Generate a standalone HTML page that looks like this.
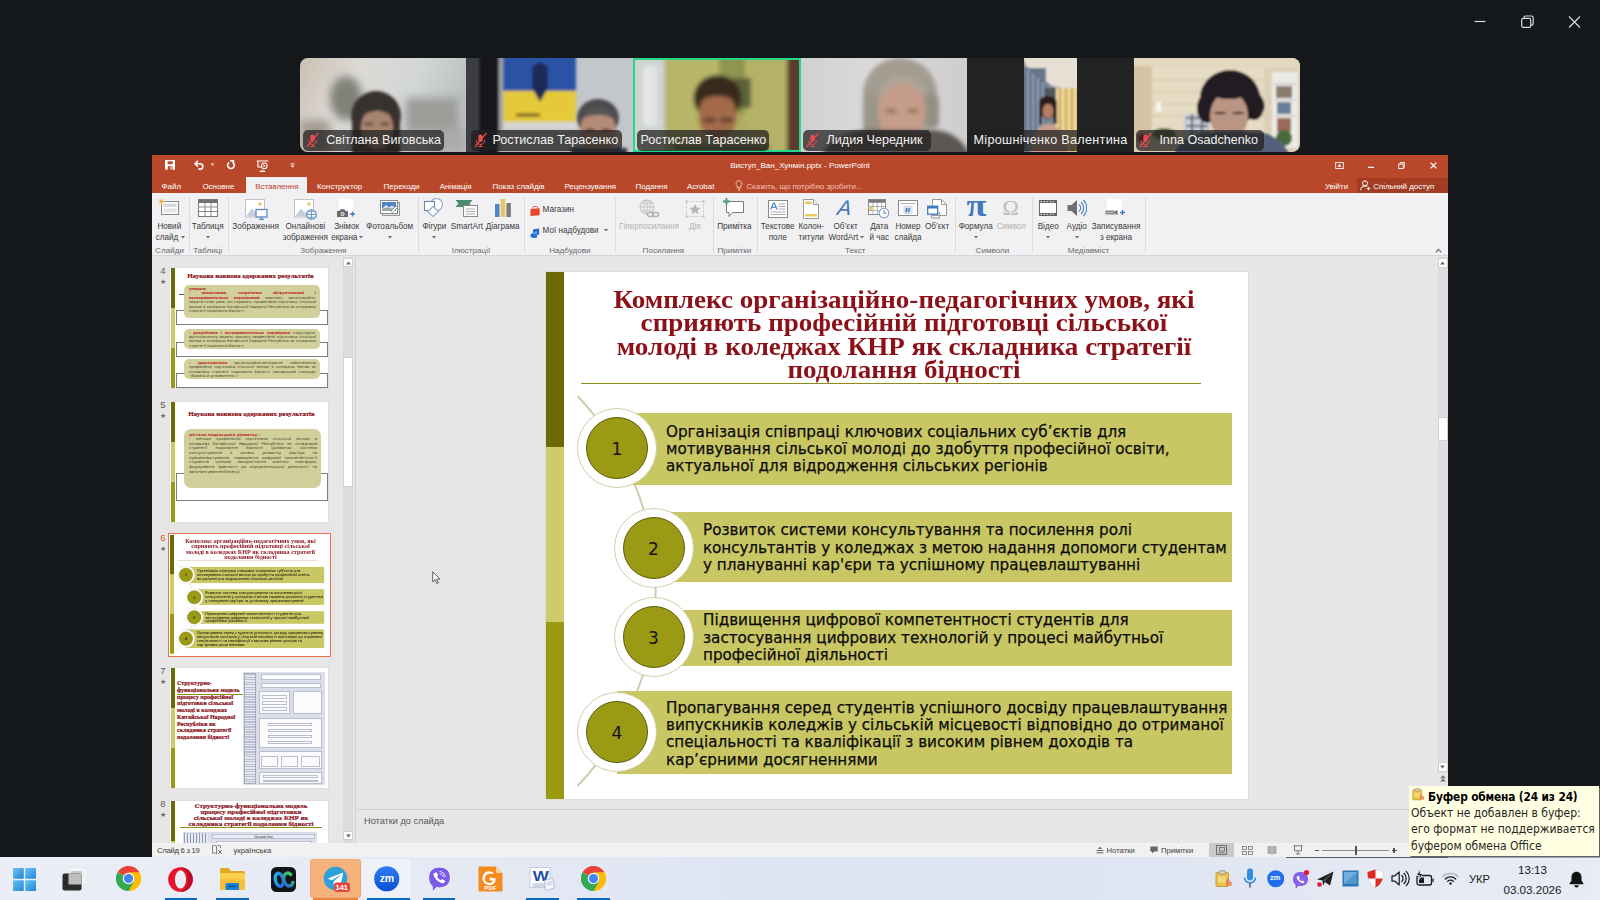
<!DOCTYPE html>
<html lang="uk">
<head>
<meta charset="utf-8">
<title>Zoom - PowerPoint</title>
<style>
*{box-sizing:border-box;margin:0;padding:0}
html,body{width:1600px;height:900px;overflow:hidden;background:#14181b;font-family:"Liberation Sans",sans-serif;}
.abs{position:absolute}
#root{position:absolute;left:0;top:0;width:1600px;height:900px;overflow:hidden;background:#14181b}
/* zoom window controls */
.zc{position:absolute;top:10px;width:24px;height:24px}
/* video strip */
#strip{position:absolute;left:300px;top:58px;width:1000px;height:94px;border-radius:8px;overflow:hidden;background:#222}
.tile{position:absolute;top:0;height:94px;overflow:hidden}
.nm{position:absolute;top:72px;height:20.500px;background:rgba(34,32,32,.74);border-radius:5px;color:#f1f1f1;font-size:12.6px;line-height:20px;white-space:nowrap}
.nm svg{vertical-align:-3px;margin-right:6px}
/* ppt window */
#ppt{position:absolute;left:152px;top:155px;width:1296px;height:702px;background:#e6e6e6;overflow:hidden}
#pg{position:absolute;left:-152px;top:-155px;width:1600px;height:900px}
#ptitle{position:absolute;left:152px;top:155px;width:1296px;height:38px;background:#b9482b}
#ribbon{position:absolute;left:152px;top:193px;width:1296px;height:63px;background:#f1f0f2;border-bottom:1px solid #d6d6d6}
.tab{position:absolute;top:180.500px;font-size:7.95px;color:#fff;white-space:nowrap;line-height:12px}
.rl{position:absolute;font-size:8.150px;color:#3b3b3b;white-space:nowrap;line-height:10.6px;text-align:center;transform:translateX(-50%)}
.gl{position:absolute;top:245.500px;font-size:8.1px;color:#6a6a6a;white-space:nowrap;line-height:10px;transform:translateX(-50%)}
.sep{position:absolute;top:197px;width:1px;height:56px;background:#dcdcdc}
.ic{position:absolute}
/* thumbs */
#thumbs{position:absolute;left:152px;top:256px;width:204px;height:587px;background:#e6e6e6;border-right:1px solid #cfcfcf;overflow:hidden}
#tpg{position:absolute;left:-152px;top:-256px;width:1600px;height:900px}
.tn{position:absolute;left:7px;font-size:9px;color:#555;line-height:10px}
.th{position:absolute;left:19px;width:157px;height:118px;background:#fff;overflow:hidden}
/* main slide */
#slide{position:absolute;left:546px;top:271.500px;width:702.300px;height:527px;background:#fff;box-shadow:0 0 0 1px #dcdcdc;overflow:hidden}
#spg{position:absolute;left:-546px;top:-271.500px;width:1600px;height:900px}
#status{position:absolute;left:152px;top:843px;width:1296px;height:14px;background:#f1f1f1;font-size:8.2px;color:#444;line-height:14px}

/* slide */
.st{position:absolute;left:546px;width:716px;text-align:center;font-family:"Liberation Serif",serif;font-weight:bold;color:#8c1018;font-size:24.6px;line-height:24px;white-space:nowrap;transform:scaleX(1.10);transform-origin:358px 0}
.bar{position:absolute;background:#c9c664}
.bt{position:absolute;font-family:"DejaVu Sans","Liberation Sans",sans-serif;font-size:15.2px;line-height:17.35px;color:#0c0c0c;white-space:nowrap;-webkit-text-stroke:0.25px #0c0c0c}
.circ{position:absolute;width:80px;height:80px;border-radius:50%;background:#fff;border:1.300px solid #cfcea8}
.circ i{position:absolute;left:8px;top:8px;width:62px;height:62px;border-radius:50%;background:#9b9a14;border:1px solid #5d5c0c;font-style:normal;font-family:"DejaVu Sans",sans-serif;font-size:17px;color:#111;text-align:center;line-height:63px}

/* thumbs */
.tnum{position:absolute;margin-top:-1.500px;left:158px;width:10px;font-size:9.5px;color:#5a5a5a;line-height:10px;text-align:center}
.tstar{position:absolute;margin-top:-1px;left:158.500px;width:9px;font-size:7px;color:#666;line-height:8px;text-align:center}
.thumb{position:absolute;left:170px;width:158px;height:120px;background:#fff;overflow:hidden;box-shadow:0 0 0 1px #dedede}
.thumb .in{position:absolute;left:-170px;width:1600px;height:900px}
.tt{position:absolute;font-family:"Liberation Serif",serif;font-weight:bold;color:#8c1018;font-size:6.95px;line-height:6.6px;white-space:nowrap;text-align:center;transform:translateX(-50%);-webkit-text-stroke:0.2px #8c1018}
.tbx{position:absolute;background:#d1d09a;border-radius:5px;font-size:3.6px;line-height:4.4px;color:#3c3c2c;padding:2px 4px 0 5px;text-align:justify;overflow:hidden;font-family:"DejaVu Sans",sans-serif}
.tbx b{color:#c0262c}
.trc{position:absolute;background:#fff;border:1px solid #7d7d7d}
.lb{position:absolute;left:170.800px;width:3.800px}
.thumb .bt{color:#33331a;-webkit-text-stroke:0.400px #33331a}
/* taskbar */
#task{position:absolute;left:0;top:857px;width:1600px;height:43px;background:linear-gradient(90deg,#ebeef6 0%,#e6eaf4 25%,#dde4f2 50%,#dfe5f2 72%,#e8ecf4 100%)}
#tip{position:absolute;left:1409px;top:785.500px;width:189.500px;height:70.500px;background:#ffffe1;color:#000;font-family:"DejaVu Sans Condensed","DejaVu Sans",sans-serif;font-size:12px;line-height:16.400px;box-shadow:1.500px 1.500px 0 #5d6068}
</style>
</head>
<body>
<div id="root">

<!-- ZOOM WINDOW CONTROLS -->
<svg class="zc" style="left:1468px" viewBox="0 0 24 24"><path d="M6.5 11.5h11" stroke="#d9dadb" stroke-width="1.2" fill="none"/></svg>
<svg class="zc" style="left:1515px" viewBox="0 0 24 24"><rect x="6.7" y="8.3" width="9" height="9" rx="1.6" stroke="#d9dadb" stroke-width="1.2" fill="none"/><path d="M9 8.2V7.6a1.6 1.6 0 0 1 1.6-1.6h6a1.6 1.6 0 0 1 1.6 1.6v6a1.6 1.6 0 0 1-1.6 1.6h-.8" stroke="#d9dadb" stroke-width="1.2" fill="none"/></svg>
<svg class="zc" style="left:1562px" viewBox="0 0 24 24"><path d="M7 6.5l11 11M18 6.5l-11 11" stroke="#d9dadb" stroke-width="1.2" fill="none"/></svg>

<!-- VIDEO STRIP -->
<div id="strip">
<div class="tile" style="left:0;width:166px">
<svg width="166" height="94" viewBox="0 0 166 94"><defs><filter id="b1" x="-20%" y="-20%" width="140%" height="140%"><feGaussianBlur stdDeviation="4"/></filter><filter id="b2" x="-20%" y="-20%" width="140%" height="140%"><feGaussianBlur stdDeviation="1.800"/></filter><linearGradient id="g1" x1="0" y1="0" x2="1" y2="0.300"><stop offset="0" stop-color="#cbbfb2"/><stop offset="0.350" stop-color="#dcd9d5"/><stop offset="0.700" stop-color="#d3d6d6"/><stop offset="1" stop-color="#bcc0c0"/></linearGradient></defs>
<rect width="166" height="94" fill="url(#g1)"/>
<g filter="url(#b1)"><ellipse cx="46" cy="40" rx="16" ry="22" fill="#7f8278"/><rect x="106" y="40" width="52" height="34" fill="#9b9d99"/><rect x="0" y="62" width="30" height="32" fill="#a59c92"/><rect x="130" y="70" width="36" height="24" fill="#aaa"/></g>
<g filter="url(#b2)"><ellipse cx="76" cy="58" rx="25" ry="25" fill="#39312f"/><rect x="52" y="58" width="48" height="40" fill="#39312f"/><ellipse cx="77" cy="70" rx="16" ry="21" fill="#a8846f"/><path d="M61 60c2-9 9-13 16-13 8 0 14 4 16 13-5-5-10-7-16-7s-11 2-16 7z" fill="#39312f"/><ellipse cx="69" cy="66" rx="4.500" ry="1.300" fill="#4e382f"/><ellipse cx="85" cy="66" rx="4.500" ry="1.300" fill="#4e382f"/></g>
</svg></div>
<div class="tile" style="left:166px;width:166.500px">
<svg width="167" height="94" viewBox="0 0 167 94"><defs><filter id="b3" x="-20%" y="-20%" width="140%" height="140%"><feGaussianBlur stdDeviation="1.600"/></filter></defs>
<rect width="167" height="94" fill="#c3c6ca"/>
<g filter="url(#b3)"><rect x="-3" y="-3" width="16" height="100" fill="#3a3d42"/><rect x="13" y="-3" width="20" height="100" fill="#17181c"/><rect x="33" y="-3" width="6" height="100" fill="#9ea3aa"/><rect x="37" y="-4" width="73" height="37" fill="#2a52a6"/><rect x="37" y="33" width="73" height="31" fill="#e6c938"/><path d="M66 8l8-4 8 4v22l-8 14-8-14z" fill="#1d2c58"/><rect x="50" y="55" width="24" height="4" fill="#8c7a2c"/><rect x="37" y="64" width="75" height="8" fill="#d6d6d6"/><rect x="33" y="72" width="90" height="26" fill="#b2b5b9"/></g>
<g filter="url(#b3)"><ellipse cx="132" cy="60" rx="21" ry="19" fill="#4d4c4e"/><ellipse cx="132" cy="74" rx="18" ry="24" fill="#b38b76"/><path d="M115 62c3-9 10-12 17-12s14 3 17 12c-5-4-11-5-17-5s-12 1-17 5z" fill="#565453"/><ellipse cx="124" cy="72" rx="5" ry="1.600" fill="#5a443a"/><ellipse cx="140" cy="72" rx="5" ry="1.600" fill="#5a443a"/><rect x="105" y="90" width="56" height="10" fill="#2c3240"/></g>
</svg></div>
<div class="tile" style="left:332.500px;width:168px">
<svg width="168" height="94" viewBox="0 0 168 94"><defs><filter id="b4" x="-20%" y="-20%" width="140%" height="140%"><feGaussianBlur stdDeviation="2.200"/></filter></defs>
<rect width="168" height="94" fill="#aead62"/>
<g filter="url(#b4)"><rect x="-4" y="-4" width="36" height="102" fill="#cfd3d2"/><rect x="10" y="8" width="14" height="60" fill="#e4e6e6"/><rect x="34" y="-4" width="56" height="102" fill="#b7b669"/><rect x="86" y="-4" width="30" height="60" fill="#8f9450"/><rect x="112" y="-4" width="44" height="102" fill="#b4b267"/><rect x="154" y="-4" width="16" height="102" fill="#5d3a2a"/><rect x="100" y="20" width="18" height="30" fill="#5c6238"/>
<g transform="translate(-3.500 -4)"><ellipse cx="88" cy="44" rx="24" ry="23" fill="#38291f"/><ellipse cx="88" cy="62" rx="19" ry="25" fill="#a26a49"/><path d="M69 50c2-12 10-16 19-16s17 4 19 16c-5-6-11-8-19-8s-14 2-19 8z" fill="#38291f"/><ellipse cx="80" cy="66" rx="7" ry="2" fill="#4a2e22"/><ellipse cx="97" cy="66" rx="7" ry="2" fill="#4a2e22"/></g><rect x="40" y="86" width="96" height="14" fill="#6e6a3e"/></g>
</svg><div style="position:absolute;left:0;top:0;width:168px;height:94px;border:2.500px solid #22d98a"></div></div>
<div class="tile" style="left:500.500px;width:166.500px">
<svg width="167" height="94" viewBox="0 0 167 94"><defs><filter id="b5" x="-20%" y="-20%" width="140%" height="140%"><feGaussianBlur stdDeviation="2"/></filter><linearGradient id="g4" x1="0" y1="0" x2="1" y2="0"><stop offset="0" stop-color="#d1d0d2"/><stop offset="0.400" stop-color="#dad9da"/><stop offset="1" stop-color="#cfcdce"/></linearGradient></defs>
<rect width="167" height="94" fill="url(#g4)"/>
<g filter="url(#b5)"><ellipse cx="99" cy="36" rx="37" ry="36" fill="#a39c91"/><rect x="62" y="36" width="20" height="38" rx="6" fill="#9b948a"/><rect x="118" y="36" width="20" height="34" rx="6" fill="#958e85"/><ellipse cx="101" cy="54" rx="24" ry="30" fill="#c59d89"/><path d="M76 44c2-20 16-30 30-26 12 3 18 12 20 24-8-12-18-18-28-16-10 2-18 10-22 18z" fill="#aea698"/><ellipse cx="90" cy="53" rx="6" ry="1.500" fill="#6b4c40"/><ellipse cx="112" cy="53" rx="6" ry="1.500" fill="#6b4c40"/><path d="M20 98c10-22 40-28 60-26h50c20 0 32 10 40 26z" fill="#5c5755"/></g>
</svg></div>
<div class="tile" style="left:667px;width:166px;background:#232323">
<svg style="position:absolute;left:56.500px;top:0" width="53" height="94" viewBox="0 0 53 94"><defs><filter id="b6" x="-20%" y="-20%" width="140%" height="140%"><feGaussianBlur stdDeviation="0.900"/></filter></defs>
<rect width="53" height="94" fill="#7c8797"/>
<g filter="url(#b6)"><path d="M-2 -2h57v36L28 28 2 8z" fill="#e6e0d4"/><rect x="-2" y="10" width="24" height="90" fill="#66758a"/><path d="M4 12v80M9 16v76M14 20v72M19 24v68" stroke="#9daabb" stroke-width="1.600"/><rect x="30" y="30" width="25" height="66" fill="#d8b25a"/><path d="M33 30v64M39 30v64M45 30v64M51 30v64" stroke="#f0e2b4" stroke-width="2.400"/><rect x="20" y="30" width="12" height="26" fill="#4f5a5e"/><ellipse cx="24" cy="50" rx="8.500" ry="11" fill="#2a1d1e"/><ellipse cx="24" cy="53" rx="5.500" ry="7.500" fill="#b47b63"/><path d="M6 96c2-22 10-30 18-30s18 8 20 30z" fill="#c9a08f"/><path d="M15 44c2-8 16-8 18 0v22h-3V48c-4-3-8-3-12 0v18h-3z" fill="#2a1d1e"/></g>
</svg></div>
<div class="tile" style="left:833.500px;width:166.500px">
<svg width="167" height="94" viewBox="0 0 167 94"><defs><filter id="b7" x="-20%" y="-20%" width="140%" height="140%"><feGaussianBlur stdDeviation="1.300"/></filter></defs>
<rect width="167" height="94" fill="#dbd0b6"/>
<g filter="url(#b7)"><rect x="-2" y="-2" width="171" height="12" fill="#e3d8bf"/><rect x="18" y="10" width="112" height="64" fill="#e6dcc3"/><path d="M18 22h112M18 34h112M18 46h112M18 58h112" stroke="#d2c4a4" stroke-width="1"/><rect x="-2" y="8" width="20" height="70" fill="#d3c4a3"/><rect x="138" y="14" width="26" height="76" fill="#ebebe6"/><path d="M140 26h22M140 42h22M140 58h22" stroke="#c9c9c4" stroke-width="1.400"/><rect x="142" y="28" width="16" height="12" fill="#8a7a70"/><rect x="143" y="44" width="14" height="12" fill="#6a7f98"/><rect x="143" y="60" width="14" height="14" fill="#9a6a5a"/><ellipse cx="150" cy="80" rx="8" ry="8" fill="#4c6a3a"/><ellipse cx="30" cy="76" rx="12" ry="6" fill="#55703f"/><circle cx="8" cy="80" r="4.500" fill="#b3232a"/><rect x="22" y="44" width="5" height="10" fill="#f4f4f0"/>
<rect x="50" y="56" width="26" height="22" fill="#c5ccd6"/><path d="M52 60h22M52 68h22M58 56v22M68 56v22" stroke="#4a5060" stroke-width="1.600"/>
<ellipse cx="96" cy="40" rx="30" ry="28" fill="#221d20"/><ellipse cx="73" cy="50" rx="10" ry="15" fill="#221d20"/><ellipse cx="120" cy="48" rx="10" ry="14" fill="#221d20"/><ellipse cx="95" cy="58" rx="19" ry="24" fill="#bb9584"/><ellipse cx="95" cy="30" rx="23" ry="11" fill="#221d20"/><ellipse cx="86" cy="55" rx="6.500" ry="1.500" fill="#5c463f"/><ellipse cx="104" cy="55" rx="6.500" ry="1.500" fill="#5c463f"/><path d="M40 98c4-18 24-24 40-24h40c16 0 30 8 36 24z" fill="#55607a"/></g>
</svg></div>
<div class="nm" style="left:3.4px;width:140.7px"><span style="position:absolute;left:22.8px;top:0">Світлана Виговська</span><span style="position:absolute;left:3px;top:0.500px"><svg width="13" height="16" viewBox="0 0 13 16"><rect x="4.300" y="2.500" width="4.400" height="7.500" rx="2.200" fill="#ea4a4e"/><path d="M2.400 8.300a4.100 4.100 0 0 0 8.200 0M6.500 12.400v1.800M4.200 14.500h4.600" fill="none" stroke="#ea4a4e" stroke-width="1"/><path d="M0.800 15L12.400 1" stroke="#ea4a4e" stroke-width="1.200"/></svg></span></div>
<div class="nm" style="left:171.3px;width:150.5px"><span style="position:absolute;left:21.1px;top:0">Ростислав Тарасенко</span><span style="position:absolute;left:3px;top:0.500px"><svg width="13" height="16" viewBox="0 0 13 16"><rect x="4.300" y="2.500" width="4.400" height="7.500" rx="2.200" fill="#ea4a4e"/><path d="M2.400 8.300a4.100 4.100 0 0 0 8.200 0M6.500 12.400v1.800M4.200 14.500h4.600" fill="none" stroke="#ea4a4e" stroke-width="1"/><path d="M0.800 15L12.400 1" stroke="#ea4a4e" stroke-width="1.200"/></svg></span></div>
<div class="nm" style="left:336.5px;width:132.2px"><span style="position:absolute;left:4.0px;top:0">Ростислав Тарасенко</span></div>
<div class="nm" style="left:503.3px;width:127.5px"><span style="position:absolute;left:23.2px;top:0"~"letter-spacing:0.330px">Лидия Чередник</span><span style="position:absolute;left:3px;top:0.500px"><svg width="13" height="16" viewBox="0 0 13 16"><rect x="4.300" y="2.500" width="4.400" height="7.500" rx="2.200" fill="#ea4a4e"/><path d="M2.400 8.300a4.100 4.100 0 0 0 8.200 0M6.500 12.400v1.800M4.200 14.500h4.600" fill="none" stroke="#ea4a4e" stroke-width="1"/><path d="M0.800 15L12.400 1" stroke="#ea4a4e" stroke-width="1.200"/></svg></span></div>
<div class="nm" style="left:669.4px;width:160.5px"><span style="position:absolute;left:4.1px;top:0;letter-spacing:0.310px">Мірошніченко Валентина</span></div>
<div class="nm" style="left:836.2px;width:127.5px"><span style="position:absolute;left:23.2px;top:0">Inna Osadchenko</span><span style="position:absolute;left:3px;top:0.500px"><svg width="13" height="16" viewBox="0 0 13 16"><rect x="4.300" y="2.500" width="4.400" height="7.500" rx="2.200" fill="#ea4a4e"/><path d="M2.400 8.300a4.100 4.100 0 0 0 8.200 0M6.500 12.400v1.800M4.200 14.500h4.600" fill="none" stroke="#ea4a4e" stroke-width="1"/><path d="M0.800 15L12.400 1" stroke="#ea4a4e" stroke-width="1.200"/></svg></span></div>
</div>

<!-- POWERPOINT WINDOW -->
<div id="ppt"><div id="pg">
  <div id="ptitle"></div>

  <!-- quick access toolbar -->
  <svg class="abs" style="left:164.800px;top:160.200px" width="10.400" height="9.800" viewBox="0 0 10.400 9.800"><rect x="0" y="0" width="10.400" height="9.800" rx="0.600" fill="#fff"/><rect x="2.600" y="1.300" width="5.200" height="2.900" fill="#b9482b"/><rect x="2.800" y="6.300" width="4.800" height="3.500" fill="#b9482b"/><rect x="5.600" y="7" width="1.200" height="2.100" fill="#fff"/></svg>
  <svg class="abs" style="left:193.600px;top:159.800px" width="11" height="10" viewBox="0 0 14 12"><path d="M1.500 4.400h6.300a3.400 3.400 0 0 1 0 6.800H5.600" fill="none" stroke="#fff" stroke-width="2.100"/><path d="M5 0.800L1.400 4.400 5 8" fill="none" stroke="#fff" stroke-width="2.100"/></svg>
  <svg class="abs" style="left:209.500px;top:163.200px" width="5" height="3.500" viewBox="0 0 6 4"><path d="M0.600 0.600h4.800L3 3.400z" fill="#f3d5cc"/></svg>
  <svg class="abs" style="left:225.500px;top:160px" width="10" height="10" viewBox="0 0 13 13"><path d="M4.100 3.200A4.300 4.300 0 1 0 9 3.300" fill="none" stroke="#fff" stroke-width="2.100"/><path d="M5.400 0.800h4.200v4.200" fill="none" stroke="#fff" stroke-width="2.100"/></svg>
  <svg class="abs" style="left:256px;top:159.500px" width="13" height="12" viewBox="0 0 15 14"><path d="M0.800 1.200h13.400M2.200 1.400v6.800h4M7.400 11.400v1.800M4.200 13.300h6.400" fill="none" stroke="#fff" stroke-width="1.300"/><circle cx="9.600" cy="6.800" r="3.300" fill="none" stroke="#fff" stroke-width="1.200"/><path d="M8.600 5.200l2.800 1.600-2.800 1.600z" fill="#fff"/></svg>
  <svg class="abs" style="left:290.200px;top:162.500px" width="5" height="5.500" viewBox="0 0 7 7"><path d="M0.800 0.900h5.400" stroke="#fff" stroke-width="1.300"/><path d="M0.800 3h5.400L3.500 6z" fill="#fff"/></svg>
  <div class="abs" style="left:600px;top:160.300px;width:400px;text-align:center;font-size:8px;color:#fff;line-height:12px;white-space:nowrap">Виступ_Ван_Хунмін.pptx - PowerPoint</div>
  <!-- window buttons -->
  <svg class="abs" style="left:1335px;top:161.500px" width="9" height="7" viewBox="0 0 11 9"><rect x="0.600" y="0.600" width="9.800" height="7.800" fill="none" stroke="#fff" stroke-width="1.100"/><path d="M5.500 2.400l2.600 3.600H2.900z" fill="#fff"/></svg>
  <svg class="abs" style="left:1367.500px;top:166px" width="6.500" height="3" viewBox="0 0 8 3"><path d="M0 1.300h7.500" stroke="#fff" stroke-width="1.500"/></svg>
  <svg class="abs" style="left:1397.500px;top:161.500px" width="7.500" height="7" viewBox="0 0 9 9"><rect x="0.600" y="2.600" width="5.800" height="5.800" fill="none" stroke="#fff" stroke-width="1.200"/><path d="M2.600 2.400V0.700h5.800v5.800H6.600" fill="none" stroke="#fff" stroke-width="1.200"/></svg>
  <svg class="abs" style="left:1429.500px;top:162px" width="7" height="7" viewBox="0 0 8 8"><path d="M0.700 0.700l6.600 6.600M7.300 0.700L0.700 7.300" stroke="#fff" stroke-width="1.500"/></svg>
  <!-- tabs -->
  <div class="abs" style="left:246px;top:177px;width:61px;height:17px;background:#f1f0f2"></div>
  <div class="tab" style="left:161.500px">Файл</div>
  <div class="tab" style="left:202.400px">Основне</div>
  <div class="tab" style="left:255.200px;color:#b9482b">Вставлення</div>
  <div class="tab" style="left:317px">Конструктор</div>
  <div class="tab" style="left:383.600px">Переходи</div>
  <div class="tab" style="left:439.700px">Анімація</div>
  <div class="tab" style="left:492.500px">Показ слайдів</div>
  <div class="tab" style="left:564.400px">Рецензування</div>
  <div class="tab" style="left:635.500px">Подання</div>
  <div class="tab" style="left:687px">Acrobat</div>
  <svg class="abs" style="left:735px;top:180px" width="8" height="11" viewBox="0 0 8 11"><path d="M4 0.700a2.900 2.900 0 0 1 1.700 5.300v1.600H2.300V6A2.900 2.900 0 0 1 4 0.700z" fill="none" stroke="#f0c9bd" stroke-width="0.900"/><path d="M2.600 9h2.800M3 10.300h2" stroke="#f0c9bd" stroke-width="0.800"/></svg>
  <div class="tab" style="left:746.400px;color:#efc3b6">Скажіть, що потрібно зробити...</div>
  <div class="tab" style="left:1325px">Увійти</div>
  <div class="abs" style="left:1357px;top:178px;width:91px;height:15px;background:#a23d23"></div>
  <svg class="abs" style="left:1359.500px;top:179.500px" width="11" height="11" viewBox="0 0 11 11"><circle cx="5" cy="3.300" r="2.500" fill="none" stroke="#fff" stroke-width="1"/><path d="M0.600 10.200c0-2.700 1.800-4.200 4.400-4.200 1 0 1.700 0.200 2.300 0.600" fill="none" stroke="#fff" stroke-width="1"/><path d="M8.600 6.800v3.600M6.800 8.600h3.600" stroke="#fff" stroke-width="0.900"/></svg>
  <div class="tab" style="left:1373.200px">Спільний доступ</div>

  <div id="ribbon"></div>
  <div class="ic" style="left:158.3px;top:198px"><svg width="22" height="20" viewBox="0 0 22 20"><rect x="3.500" y="3.500" width="17" height="13" fill="#fff" stroke="#8a8a8a"/><rect x="5.500" y="5.500" width="13" height="3.500" fill="#d9d9d9"/><rect x="5.500" y="10.500" width="13" height="4" fill="#e4e4e4"/><path d="M3.500 0.500v6M0.500 3.500h6M1.400 1.400l4.200 4.200M5.600 1.400L1.400 5.600" stroke="#e8b64c" stroke-width="1"/></svg></div>
  <div class="rl" style="left:169.3px;top:222.300px;">Новий<br>слайд&nbsp;&nbsp;</div>
  <svg class="abs" style="left:180.5px;top:236px" width="4" height="2.500" viewBox="0 0 5 3"><path d="M0 0h5L2.500 3z" fill="#6a6a6a"/></svg>
  <div class="sep" style="left:188.500px"></div>
  <div class="ic" style="left:197.7px;top:199px"><svg width="20" height="18" viewBox="0 0 20 18"><rect x="0.500" y="0.500" width="19" height="17" fill="#fff" stroke="#7a7a7a"/><rect x="1" y="1" width="18" height="3" fill="#6f6f6f"/><path d="M0.500 8h19M0.500 12.500h19M7 4v13.500M13 4v13.500" stroke="#8c8c8c" stroke-width="1"/></svg></div>
  <div class="rl" style="left:207.7px;top:222.300px;">Таблиця</div>
  <svg class="abs" style="left:205.7px;top:236px" width="4" height="2.500" viewBox="0 0 5 3"><path d="M0 0h5L2.500 3z" fill="#6a6a6a"/></svg>
  <div class="sep" style="left:228px"></div>
  <div class="ic" style="left:244.6px;top:199px"><svg width="23" height="21" viewBox="0 0 23 21"><rect x="0.500" y="0.500" width="19" height="17.500" fill="#fff" stroke="#c2c2c2"/><path d="M1 17.500l6-8 4 4.500 3-3 5 6.500z" fill="#c5cedb"/><circle cx="15" cy="5" r="1.800" fill="#e6c968"/><rect x="11" y="10.500" width="11" height="7.500" fill="#fff" stroke="#5c8ac4" stroke-width="1.300"/><path d="M14 20.300h5M16.500 18v2.300" stroke="#5c8ac4" stroke-width="1.200"/></svg></div>
  <div class="rl" style="left:255.6px;top:222.300px;">Зображення</div>
  <div class="ic" style="left:294.4px;top:199px"><svg width="23" height="21" viewBox="0 0 23 21"><rect x="0.500" y="0.500" width="19" height="17.500" fill="#fff" stroke="#c2c2c2"/><path d="M1 17.500l6-8 4 4.500 3-3 5 6.500z" fill="#c5cedb"/><circle cx="15" cy="5" r="1.800" fill="#e6c968"/><circle cx="17.500" cy="15.500" r="4.800" fill="#eef3fa" stroke="#5c8ac4" stroke-width="1.100"/><path d="M12.700 15.500h9.600M17.500 10.700v9.600M14.800 12c1.700 1 3.700 1 5.400 0M14.800 19c1.700-1 3.700-1 5.400 0" stroke="#5c8ac4" stroke-width="0.800" fill="none"/></svg></div>
  <div class="rl" style="left:305.4px;top:222.300px;">Онлайнові<br>зображення</div>
  <div class="ic" style="left:335.6px;top:199px"><svg width="22" height="20" viewBox="0 0 22 20"><rect x="3" y="0" width="14" height="14" fill="#fff"/><path d="M1 12h2.500l1-1.800h4l1 1.800H12v6H1z" fill="#6a6a6a"/><circle cx="6.500" cy="15" r="2" fill="#f1f0f2"/><circle cx="6.500" cy="15" r="1" fill="#6a6a6a"/><path d="M16.500 12.500v5M14 15h5" stroke="#3e7ac0" stroke-width="1.300"/></svg></div>
  <div class="rl" style="left:346.6px;top:222.300px;">Знімок<br>екрана&nbsp;&nbsp;</div>
  <svg class="abs" style="left:358.5px;top:236px" width="4" height="2.500" viewBox="0 0 5 3"><path d="M0 0h5L2.500 3z" fill="#6a6a6a"/></svg>
  <div class="ic" style="left:378.7px;top:199px"><svg width="22" height="20" viewBox="0 0 22 20"><rect x="3.500" y="3.500" width="17" height="13" fill="#e3e3e3" stroke="#9a9a9a"/><rect x="1.500" y="1.500" width="17" height="13" fill="#fff" stroke="#8a8a8a"/><rect x="3" y="3" width="14" height="7" fill="#4f86c6"/><path d="M3 10l4-4 3 2.500 3-2 4 3.500z" fill="#dfe8f2"/><path d="M3 10l5-1.500 9 1.500v2H3z" fill="#9aa9a0"/><path d="M12 12l5-5 1.500 1.500-5 5z" fill="#fff" stroke="#777" stroke-width="0.700"/></svg></div>
  <div class="rl" style="left:389.7px;top:222.300px;">Фотоальбом</div>
  <svg class="abs" style="left:387.7px;top:236px" width="4" height="2.500" viewBox="0 0 5 3"><path d="M0 0h5L2.500 3z" fill="#6a6a6a"/></svg>
  <div class="sep" style="left:417.500px"></div>
  <div class="ic" style="left:423.4px;top:198px"><svg width="22" height="20" viewBox="0 0 22 20"><circle cx="13.500" cy="6.500" r="6" fill="#fff" stroke="#8fa9cc" stroke-width="1.100"/><rect x="1.500" y="3.500" width="10" height="9" fill="#fff" stroke="#6c87ad" stroke-width="1.100"/><path d="M10 8.500l5.500 5-5.500 5-5.500-5z" fill="#fff" stroke="#8fa9cc" stroke-width="1.100"/></svg></div>
  <div class="rl" style="left:434.4px;top:222.300px;">Фігури</div>
  <svg class="abs" style="left:432.4px;top:236px" width="4" height="2.500" viewBox="0 0 5 3"><path d="M0 0h5L2.500 3z" fill="#6a6a6a"/></svg>
  <div class="ic" style="left:454.9px;top:199px"><svg width="24" height="20" viewBox="0 0 24 20"><path d="M0.500 1h17l-3 3.500 3 3.500h-17l3-3.500z" fill="#4b8c6f"/><rect x="8.500" y="6.500" width="14" height="11" fill="#fff" stroke="#8a8a8a"/><path d="M11 10h9M11 12.500h9M11 15h9" stroke="#a9a9a9" stroke-width="1"/></svg></div>
  <div class="rl" style="left:466.9px;top:222.300px;">SmartArt</div>
  <div class="ic" style="left:492.6px;top:198px"><svg width="20" height="20" viewBox="0 0 20 20"><rect x="2" y="6" width="4.500" height="13" fill="#4f86c6"/><rect x="7.700" y="1" width="4.500" height="18" fill="#e3c66c"/><rect x="13.400" y="5" width="4.500" height="14" fill="#7d7d7d"/></svg></div>
  <div class="rl" style="left:502.6px;top:222.300px;">Діаграма</div>
  <div class="sep" style="left:524px"></div>
  <div class="ic" style="left:530px;top:202.500px"><svg width="10.500" height="10.500" viewBox="0 0 12 12"><path d="M3.500 3V1.500a1 1 0 0 1 1-1h3a1 1 0 0 1 1 1V3" fill="none" stroke="#d04525" stroke-width="1"/><path d="M0.500 3.500l10.500-1v8l-10.500 1z" fill="#e4472a"/></svg></div>
  <div class="rl" style="left:542.600px;top:204.600px;transform:none">Магазин</div>
  <div class="ic" style="left:530px;top:224px"><svg width="10.500" height="10.500" viewBox="0 0 12 12"><path d="M3.500 1.500l7-1v7l-2.500 0.500v3l-4.500 0.500z" fill="#2371c9"/><circle cx="3" cy="8.500" r="2.500" fill="#2371c9"/><path d="M4 4.500l4-0.500v3l-4 0.500z" fill="#5a9ae0"/></svg></div>
  <div class="rl" style="left:542.600px;top:225.500px;transform:none">Мої надбудови</div>
  <svg class="abs" style="left:604.1px;top:228.500px" width="4" height="2.500" viewBox="0 0 5 3"><path d="M0 0h5L2.500 3z" fill="#6a6a6a"/></svg>
  <div class="sep" style="left:614.500px"></div>
  <div class="ic" style="left:638.0px;top:199px"><svg width="22" height="20" viewBox="0 0 22 20"><circle cx="9" cy="8" r="7" fill="none" stroke="#c2c2c2" stroke-width="1.100"/><path d="M2 8h14M9 1v14M4 3.500c3 1.800 7 1.800 10 0M4 12.500c3-1.800 7-1.800 10 0" stroke="#c2c2c2" stroke-width="0.900" fill="none"/><ellipse cx="9" cy="8" rx="3.500" ry="7" fill="none" stroke="#c2c2c2" stroke-width="0.900"/><rect x="9.500" y="13.500" width="6" height="4" rx="2" fill="#f1f0f2" stroke="#b0b0b0" stroke-width="1.400"/><rect x="14.500" y="13.500" width="6" height="4" rx="2" fill="none" stroke="#b0b0b0" stroke-width="1.400"/></svg></div>
  <div class="rl" style="left:649px;top:222.300px;color:#b3b3b3;">Гіперпосилання</div>
  <div class="ic" style="left:684.8px;top:200px"><svg width="20" height="18" viewBox="0 0 20 18"><rect x="1.500" y="1.500" width="17" height="15" fill="none" stroke="#c6c6c6" stroke-width="0.900" stroke-dasharray="2 1.200"/><path d="M10 4l1.600 3.600 3.900 0.300-3 2.500 1 3.800L10 12.100 6.500 14.200l1-3.800-3-2.500 3.900-0.300z" fill="#b5b5b5"/><g fill="#bdbdbd"><rect x="0.500" y="0.500" width="2" height="2"/><rect x="17.500" y="0.500" width="2" height="2"/><rect x="0.500" y="15.500" width="2" height="2"/><rect x="17.500" y="15.500" width="2" height="2"/></g></svg></div>
  <div class="rl" style="left:694.8px;top:222.300px;color:#b3b3b3;">Дія</div>
  <div class="sep" style="left:712.500px"></div>
  <div class="ic" style="left:723.4px;top:197.5px"><svg width="22" height="20" viewBox="0 0 22 20"><path d="M3.500 3.500h17v11h-11l-3.500 4v-4h-2.500z" fill="#fff" stroke="#7a7a7a" stroke-width="1"/><path d="M3.500 0v7M0 3.500h7" stroke="#4e9a72" stroke-width="1.800"/></svg></div>
  <div class="rl" style="left:734.4px;top:222.300px;">Примітка</div>
  <div class="sep" style="left:756.500px"></div>
  <div class="ic" style="left:767.7px;top:200px"><svg width="20" height="18" viewBox="0 0 20 18"><rect x="0.500" y="0.500" width="19" height="17" fill="#fff" stroke="#8a8a8a"/><path d="M10.500 4h7M10.500 6.500h7M10.500 9h7M2.500 12h15M2.500 14.500h15" stroke="#a5a5a5" stroke-width="0.900"/><path d="M2.700 9.500l2.800-6.500h0.800l2.800 6.500M3.900 7.200h4" fill="none" stroke="#3e7ac0" stroke-width="1.100"/></svg></div>
  <div class="rl" style="left:777.7px;top:222.300px;">Текстове<br>поле</div>
  <div class="ic" style="left:803.2px;top:199px"><svg width="16" height="20" viewBox="0 0 16 20"><path d="M0.500 0.500h10l5 5v14h-15z" fill="#fff" stroke="#9a9a9a"/><path d="M10.500 0.500v5h5" fill="#f1f0f2" stroke="#9a9a9a"/><rect x="2" y="2.500" width="7" height="2.500" fill="#e8c95c"/><rect x="2" y="15" width="12" height="2.500" fill="#e8c95c"/></svg></div>
  <div class="rl" style="left:811.2px;top:222.300px;">Колон-<br>титули</div>
  <div class="ic" style="left:835.7px;top:198px"><svg width="20" height="20" viewBox="0 0 20 20"><text x="3" y="17" font-family="Liberation Sans,sans-serif" font-size="21" font-style="italic" fill="#3d77bd" transform="skewX(-8)">A</text></svg></div>
  <div class="rl" style="left:845.7px;top:222.300px;">Об’єкт<br>WordArt&nbsp;&nbsp;</div>
  <svg class="abs" style="left:859.5px;top:236px" width="4" height="2.500" viewBox="0 0 5 3"><path d="M0 0h5L2.500 3z" fill="#6a6a6a"/></svg>
  <div class="ic" style="left:868.2px;top:199px"><svg width="22" height="20" viewBox="0 0 22 20"><rect x="0.500" y="0.500" width="17" height="15" fill="#fff" stroke="#8a8a8a"/><rect x="1" y="1" width="16" height="2.800" fill="#7a7a7a"/><path d="M0.500 7.500h17M0.500 11.500h17M5 4v11.500M9.300 4v11.500M13.600 4v11.500" stroke="#a8a8a8" stroke-width="0.900"/><rect x="1.500" y="8" width="3" height="3" fill="#e8c95c"/><circle cx="16" cy="14" r="4.800" fill="#fff" stroke="#7f9fc6" stroke-width="1.100"/><path d="M16 11v3.200h2.500" fill="none" stroke="#5f7fa6" stroke-width="1"/></svg></div>
  <div class="rl" style="left:879.2px;top:222.300px;">Дата<br>й час</div>
  <div class="ic" style="left:898.0px;top:200px"><svg width="20" height="16" viewBox="0 0 20 16"><rect x="0.500" y="0.500" width="19" height="15" fill="#fff" stroke="#8a8a8a"/><path d="M2.500 3.500h15" stroke="#b0b0b0"/><rect x="6" y="6" width="8" height="7.500" fill="#eaf0f8" stroke="#b5c6dc" stroke-width="0.600"/><path d="M8.800 7.500l-0.800 5M11.300 7.500l-0.800 5M7.300 9h5.200M7 11h5.200" stroke="#3e6fb0" stroke-width="0.900"/></svg></div>
  <div class="rl" style="left:908px;top:222.300px;">Номер<br>слайда</div>
  <div class="ic" style="left:927.1px;top:198.5px"><svg width="20" height="20" viewBox="0 0 20 20"><path d="M5.500 0.500h9l5 5v11h-14z" fill="#fff" stroke="#9a9a9a"/><path d="M14.500 0.500v5h5" fill="none" stroke="#9a9a9a"/><rect x="0.700" y="7.200" width="10" height="8" fill="#fff" stroke="#3e7ac0" stroke-width="1.300"/><rect x="0.700" y="7.200" width="10" height="2.300" fill="#3e7ac0"/><path d="M4.500 16v3h8v-6" fill="none" stroke="#9a9a9a"/></svg></div>
  <div class="rl" style="left:937.1px;top:222.300px;">Об’єкт</div>
  <div class="sep" style="left:954.500px"></div>
  <div class="ic" style="left:964.7px;top:198px"><svg width="24" height="22" viewBox="0 0 24 22"><text x="1.500" y="17.500" font-family="Liberation Serif,serif" font-size="31" font-weight="bold" fill="#3d77bd" textLength="20" lengthAdjust="spacingAndGlyphs">π</text></svg></div>
  <div class="rl" style="left:975.7px;top:222.300px;">Формула</div>
  <svg class="abs" style="left:973.7px;top:236px" width="4" height="2.500" viewBox="0 0 5 3"><path d="M0 0h5L2.500 3z" fill="#6a6a6a"/></svg>
  <div class="ic" style="left:1001.3px;top:198px"><svg width="20" height="20" viewBox="0 0 20 20"><text x="1.500" y="17" font-family="Liberation Serif,serif" font-size="22" fill="#bcbcbc">Ω</text></svg></div>
  <div class="rl" style="left:1011.3px;top:222.300px;color:#b3b3b3;">Символ</div>
  <div class="sep" style="left:1031.500px"></div>
  <div class="ic" style="left:1039.2px;top:200px"><svg width="18" height="16" viewBox="0 0 18 16"><rect x="0.500" y="0.500" width="17" height="15" fill="#fff" stroke="#6a6a6a"/><rect x="0.500" y="0.500" width="17" height="2.500" fill="#5a5a5a"/><rect x="0.500" y="13" width="17" height="2.500" fill="#5a5a5a"/><path d="M1.500 1.700h15M1.500 14.300h15" stroke="#fff" stroke-width="1.100" stroke-dasharray="1.600 1.400"/></svg></div>
  <div class="rl" style="left:1048.2px;top:222.300px;">Відео</div>
  <svg class="abs" style="left:1046.2px;top:236px" width="4" height="2.500" viewBox="0 0 5 3"><path d="M0 0h5L2.500 3z" fill="#6a6a6a"/></svg>
  <div class="ic" style="left:1066.7px;top:199px"><svg width="20" height="18" viewBox="0 0 20 18"><path d="M0.500 6h4l5.500-5v16l-5.500-5h-4z" fill="#6f6f6f"/><path d="M12 5.500a4.500 4.500 0 0 1 0 7M14 3a8 8 0 0 1 0 12M16.300 1a11 11 0 0 1 0 16" fill="none" stroke="#4f86c6" stroke-width="1.200"/></svg></div>
  <div class="rl" style="left:1076.7px;top:222.300px;">Аудіо</div>
  <svg class="abs" style="left:1074.7px;top:236px" width="4" height="2.500" viewBox="0 0 5 3"><path d="M0 0h5L2.500 3z" fill="#6a6a6a"/></svg>
  <div class="ic" style="left:1105.0px;top:199px"><svg width="22" height="20" viewBox="0 0 22 20"><rect x="2" y="0" width="15" height="14" fill="#fff"/><path d="M0.500 11.500h9v4h-9z" fill="#8a8a8a"/><path d="M9.500 12.500l3-1.500v5l-3-1.500z" fill="#6f6f6f"/><path d="M2 13.500h6" stroke="#fff" stroke-width="0.800" stroke-dasharray="1.200 1"/><path d="M17.500 11v5M15 13.500h5" stroke="#3e7ac0" stroke-width="1.300"/></svg></div>
  <div class="rl" style="left:1116px;top:222.300px;">Записування<br>з екрана</div>
  <div class="sep" style="left:1145px"></div>
  <div class="gl" style="left:169.5px">Слайди</div>
  <div class="gl" style="left:207.7px">Таблиці</div>
  <div class="gl" style="left:323.3px">Зображення</div>
  <div class="gl" style="left:471px">Ілюстрації</div>
  <div class="gl" style="left:569.9px">Надбудови</div>
  <div class="gl" style="left:663.3px">Посилання</div>
  <div class="gl" style="left:734.4px">Примітки</div>
  <div class="gl" style="left:855.3px">Текст</div>
  <div class="gl" style="left:992.4px">Символи</div>
  <div class="gl" style="left:1088.4px">Медіавміст</div>
  <svg class="abs" style="left:1435px;top:247.500px" width="7" height="5" viewBox="0 0 7 5"><path d="M0.700 4.300L3.500 1.300l2.800 3" fill="none" stroke="#666" stroke-width="1.100"/></svg>

  <div id="thumbs"><div id="tpg">
  <div class="tnum" style="top:267.5px;color:#5a5a5a">4</div><div class="tstar" style="top:279.0px">★</div>
  <div class="tnum" style="top:401px;color:#5a5a5a">5</div><div class="tstar" style="top:412.5px">★</div>
  <div class="tnum" style="top:534px;color:#d9532f">6</div><div class="tstar" style="top:545.5px">★</div>
  <div class="tnum" style="top:667.5px;color:#5a5a5a">7</div><div class="tstar" style="top:679.0px">★</div>
  <div class="tnum" style="top:800.5px;color:#5a5a5a">8</div><div class="tstar" style="top:812.0px">★</div>
  <div class="thumb" style="top:268px"><div class="in" style="top:-268px"><div class="lb" style="top:268px;height:40px;background:#6c6a04"></div><div class="lb" style="top:308px;height:40px;background:#cdcb6c"></div><div class="lb" style="top:348px;height:40px;background:#9a9a12"></div><div class="tt" style="left:250.500px;top:273px">Наукова новизна одержаних результатів</div><div class="abs" style="left:179px;top:294px;width:5px;height:1px;background:#555"></div><div class="trc" style="left:176px;top:310px;width:152px;height:15px"></div><div class="trc" style="left:176px;top:341.5px;width:152px;height:15px"></div><div class="trc" style="left:176px;top:372.5px;width:152px;height:15px"></div><div class="tbx" style="left:184px;top:285px;width:136px;height:32.500px"><b>уперше:</b><br><b>– визначений, теоретично обґрунтований і експериментально перевірений</b> комплекс організаційно-педагогічних умов, які сприяють професійній підготовці сільської молоді в коледжах Китайської Народної Республіки як складника стратегії подолання бідності</div><div class="tbx" style="left:184px;top:328.5px;width:136px;height:20px"><b>- розроблено і експериментально перевірено</b> структурно-функціональну модель процесу професійної підготовки сільської молоді в коледжах Китайської Народної Республіки як складника стратегії подолання бідності</div><div class="tbx" style="left:184px;top:359px;width:136px;height:20px"><b>- удосконалено</b> організаційно-методичне забезпечення професійної підготовки сільської молоді в коледжах Китаю як складника стратегії подолання бідності (авторський спецкурс «Відвага й устремління»)</div></div></div>
  <div class="thumb" style="top:401.5px"><div class="in" style="top:-401.5px"><div class="lb" style="top:401.5px;height:40px;background:#6c6a04"></div><div class="lb" style="top:441.5px;height:40px;background:#cdcb6c"></div><div class="lb" style="top:481.5px;height:40px;background:#9a9a12"></div><div class="tt" style="left:251.500px;top:411.0px">Наукова новизна одержаних результатів</div><div class="trc" style="left:176px;top:472.5px;width:152px;height:28px"></div><div class="tbx" style="left:184px;top:428.5px;width:137px;height:59px;border-radius:7px;padding-top:4px;font-size:3.900px;line-height:4.650px"><b><i>дістали подальшого розвитку :</i></b><br>– методи професійної підготовки сільської молоді в коледжах Китайської Народної Республіки як складника стратегії подолання бідності (розвиток системи консультування з питань розвитку кар’єри та працевлаштування, підвищення цифрової компетентності студентів шляхом використання освітніх платформ, формування здатності до підприємницької діяльності та започаткування бізнесу).</div></div></div>
  <div class="abs" style="left:167.500px;top:532.5px;width:163px;height:124.500px;border:1.800px solid #ec7050;background:#fff"></div>
  <div class="thumb" style="top:535px;box-shadow:none"><div style="position:absolute;left:0;top:0;width:703px;height:528px;transform:scale(0.22475);transform-origin:0 0;overflow:hidden"><div style="position:absolute;left:-546px;top:-271px;width:1600px;height:900px">

  <div class="abs" style="left:546px;top:271px;width:18px;height:176.300px;background:#6c6a04"></div>
  <div class="abs" style="left:546px;top:447.300px;width:18px;height:175px;background:#cdcb6c"></div>
  <div class="abs" style="left:546px;top:622px;width:18px;height:178px;background:#9a9a12"></div>
  <div class="st" style="top:288px">Комплекс організаційно-педагогічних умов, які</div>
  <div class="st" style="top:311.3px">сприяють професійній підготовці сільської</div>
  <div class="st" style="top:334.6px">молоді в коледжах КНР як складника стратегії</div>
  <div class="st" style="top:357.9px">подолання бідності</div>
  <div class="abs" style="left:581px;top:382.5px;width:620px;height:1.5px;background:#8e8d1c"></div>
  <svg class="abs" style="left:546px;top:271px" width="703" height="528" viewBox="546 271 703 528"><path d="M577.5 396 A282.5 282.5 0 0 1 577.5 786" fill="none" stroke="#cbcbac" stroke-width="1.900"/></svg>
  <div class="bar" style="left:617px;top:413px;width:614.500px;height:71.500px"></div>
  <div class="bar" style="left:653px;top:512.400px;width:578.500px;height:69.700px"></div>
  <div class="bar" style="left:653px;top:609.500px;width:578.500px;height:56px"></div>
  <div class="bar" style="left:617px;top:690.600px;width:614.500px;height:83.300px"></div>
  <div class="circ" style="left:577px;top:408px"><i>1</i></div>
  <div class="circ" style="left:613.5px;top:508px"><i>2</i></div>
  <div class="circ" style="left:613.5px;top:597px"><i>3</i></div>
  <div class="circ" style="left:577px;top:692px"><i>4</i></div>
  <div class="bt" style="left:666px;top:423.8px">Організація співпраці ключових соціальних суб’єктів для<br>мотивування сільської молоді до здобуття професійної освіти,<br>актуальної для відродження сільських регіонів</div>
  <div class="bt" style="left:703px;top:522.2px">Розвиток системи консультування та посилення ролі<br><span style="letter-spacing:-0.080px">консультантів у коледжах з метою надання допомоги студентам</span><br>у плануванні кар'єри та успішному працевлаштуванні</div>
  <div class="bt" style="left:703px;top:612.3px">Підвищення цифрової компетентності студентів для<br>застосування цифрових технологій у процесі майбутньої<br>професійної діяльності</div>
  <div class="bt" style="left:666px;top:699.5px">Пропагування серед студентів успішного досвіду працевлаштування<br>випускників коледжів у сільській місцевості відповідно до отриманої<br>спеціальності та кваліфікації з високим рівнем доходів та<br>кар’єрними досягненнями</div>

  </div></div></div>
  <div class="thumb" style="top:667.5px"><div class="in" style="top:-667.5px"><div class="lb" style="top:667.5px;height:40px;background:#6c6a04"></div><div class="lb" style="top:707.5px;height:40px;background:#cdcb6c"></div><div class="lb" style="top:747.5px;height:40px;background:#9a9a12"></div><div class="tt" style="left:177px;top:680.0px;transform:none;text-align:left;font-size:6.050px;line-height:6.750px">Структурно-<br>функціональна модель<br>процесу професійної<br>підготовки сільської<br>молоді в коледжах<br>Китайської Народної<br>Республіки як<br>складника стратегії<br>подолання бідності</div><div class="abs" style="left:177px;top:693.5px;width:66px;height:1px;background:#8e8d1c"></div><div class="abs" style="left:243px;top:671.5px;width:81.500px;height:113px;background:#d9deea"></div><div class="abs" style="left:243.500px;top:672.5px;width:12px;height:111px;background:repeating-linear-gradient(180deg,#b9bfd0 0 1px,#e6e9f1 1px 2.500px);border:0.500px solid #aab"></div><div class="abs" style="left:261px;top:673.5px;width:60px;height:6px;background:#fbfbfd;border:0.500px solid #b9bfce"></div><div class="abs" style="left:261px;top:682.5px;width:60px;height:5px;background:#fbfbfd;border:0.500px solid #b9bfce"></div><div class="abs" style="left:259px;top:690.5px;width:31px;height:23px;background:#fbfbfd;border:0.500px solid #b9bfce"></div><div class="abs" style="left:293px;top:690.5px;width:29px;height:23px;background:#fbfbfd;border:0.500px solid #b9bfce"></div><div class="abs" style="left:262px;top:694.5px;width:25px;height:4px;background:#fbfbfd;border:0.500px solid #b9bfce"></div><div class="abs" style="left:262px;top:700.5px;width:25px;height:4px;background:#fbfbfd;border:0.500px solid #b9bfce"></div><div class="abs" style="left:262px;top:706.5px;width:25px;height:4px;background:#fbfbfd;border:0.500px solid #b9bfce"></div><div class="abs" style="left:259px;top:717.5px;width:63px;height:30px;background:#fbfbfd;border:0.500px solid #b9bfce"></div><div class="abs" style="left:268px;top:722.5px;width:44px;height:3.5px;background:#fbfbfd;border:0.500px solid #b9bfce"></div><div class="abs" style="left:268px;top:728.5px;width:44px;height:3.5px;background:#fbfbfd;border:0.500px solid #b9bfce"></div><div class="abs" style="left:268px;top:734.5px;width:44px;height:3.5px;background:#fbfbfd;border:0.500px solid #b9bfce"></div><div class="abs" style="left:268px;top:740.5px;width:44px;height:3.5px;background:#fbfbfd;border:0.500px solid #b9bfce"></div><div class="abs" style="left:259px;top:750.5px;width:63px;height:18px;background:#fbfbfd;border:0.500px solid #b9bfce"></div><div class="abs" style="left:261px;top:755.5px;width:17px;height:11px;background:#fbfbfd;border:0.500px solid #b9bfce"></div><div class="abs" style="left:281px;top:755.5px;width:17px;height:11px;background:#fbfbfd;border:0.500px solid #b9bfce"></div><div class="abs" style="left:301px;top:755.5px;width:19px;height:11px;background:#fbfbfd;border:0.500px solid #b9bfce"></div><div class="abs" style="left:259px;top:771.5px;width:63px;height:12px;background:#fbfbfd;border:0.500px solid #b9bfce"></div><div class="abs" style="left:263px;top:774.5px;width:55px;height:3px;background:#fbfbfd;border:0.500px solid #b9bfce"></div><div class="abs" style="left:263px;top:779.5px;width:55px;height:2.5px;background:#fbfbfd;border:0.500px solid #b9bfce"></div></div></div>
  <div class="thumb" style="top:800.5px"><div class="in" style="top:-800.5px"><div class="lb" style="top:800.5px;height:40px;background:#6c6a04"></div><div class="lb" style="top:840.5px;height:40px;background:#cdcb6c"></div><div class="lb" style="top:880.5px;height:40px;background:#9a9a12"></div><div class="tt" style="left:251px;top:803.0px;font-size:7px;line-height:6.050px">Структурно-функціональна модель<br>процесу професійної підготовки<br>сільської молоді в коледжах КНР як<br>складника стратегії подолання бідності</div><div class="abs" style="left:180px;top:827px;width:142px;height:1px;background:#8e8d1c"></div><div class="abs" style="left:183px;top:832.0px;width:134px;height:20px;background:#d9deea"></div><div class="abs" style="left:184px;top:833.0px;width:24px;height:18px;background:repeating-linear-gradient(90deg,#8f98b3 0 1px,#e6e9f1 1px 3px)"></div><div class="abs" style="left:212px;top:833.5px;width:103px;height:5px;background:#e9ecf4;border:0.500px solid #b9bfce;font-size:2.800px;line-height:4px;text-align:center;color:#333">Цільовий блок</div><div class="abs" style="left:216px;top:840.5px;width:96px;height:4px;background:#fbfbfd;border:0.500px solid #b9bfce"></div></div></div>
  <div class="abs" style="left:343px;top:257px;width:10px;height:586px;background:#dcdcdc"></div>
  <div class="abs" style="left:343px;top:258px;width:10px;height:9px;background:#fff;border:1px solid #cfcfcf"></div><svg class="abs" style="left:345.500px;top:260.500px" width="5" height="4" viewBox="0 0 5 4"><path d="M0 3.500h5L2.500 0.500z" fill="#666"/></svg>
  <div class="abs" style="left:343px;top:831px;width:10px;height:9px;background:#fff;border:1px solid #cfcfcf"></div><svg class="abs" style="left:345.500px;top:834px" width="5" height="4" viewBox="0 0 5 4"><path d="M0 0.500h5L2.500 3.500z" fill="#666"/></svg>
  <div class="abs" style="left:343px;top:356.500px;width:10px;height:130px;background:#fff;border:1px solid #d0d0d0"></div>

  </div></div>
  <div id="slide"><div id="spg">

  <div class="abs" style="left:546px;top:271px;width:18px;height:176.300px;background:#6c6a04"></div>
  <div class="abs" style="left:546px;top:447.300px;width:18px;height:175px;background:#cdcb6c"></div>
  <div class="abs" style="left:546px;top:622px;width:18px;height:178px;background:#9a9a12"></div>
  <div class="st" style="top:288px">Комплекс організаційно-педагогічних умов, які</div>
  <div class="st" style="top:311.3px">сприяють професійній підготовці сільської</div>
  <div class="st" style="top:334.6px">молоді в коледжах КНР як складника стратегії</div>
  <div class="st" style="top:357.9px">подолання бідності</div>
  <div class="abs" style="left:581px;top:382.5px;width:620px;height:1.5px;background:#8e8d1c"></div>
  <svg class="abs" style="left:546px;top:271px" width="703" height="528" viewBox="546 271 703 528"><path d="M577.5 396 A282.5 282.5 0 0 1 577.5 786" fill="none" stroke="#cbcbac" stroke-width="1.900"/></svg>
  <div class="bar" style="left:617px;top:413px;width:614.500px;height:71.500px"></div>
  <div class="bar" style="left:653px;top:512.400px;width:578.500px;height:69.700px"></div>
  <div class="bar" style="left:653px;top:609.500px;width:578.500px;height:56px"></div>
  <div class="bar" style="left:617px;top:690.600px;width:614.500px;height:83.300px"></div>
  <div class="circ" style="left:577px;top:408px"><i>1</i></div>
  <div class="circ" style="left:613.5px;top:508px"><i>2</i></div>
  <div class="circ" style="left:613.5px;top:597px"><i>3</i></div>
  <div class="circ" style="left:577px;top:692px"><i>4</i></div>
  <div class="bt" style="left:666px;top:423.8px">Організація співпраці ключових соціальних суб’єктів для<br>мотивування сільської молоді до здобуття професійної освіти,<br>актуальної для відродження сільських регіонів</div>
  <div class="bt" style="left:703px;top:522.2px">Розвиток системи консультування та посилення ролі<br><span style="letter-spacing:-0.080px">консультантів у коледжах з метою надання допомоги студентам</span><br>у плануванні кар'єри та успішному працевлаштуванні</div>
  <div class="bt" style="left:703px;top:612.3px">Підвищення цифрової компетентності студентів для<br>застосування цифрових технологій у процесі майбутньої<br>професійної діяльності</div>
  <div class="bt" style="left:666px;top:699.5px">Пропагування серед студентів успішного досвіду працевлаштування<br>випускників коледжів у сільській місцевості відповідно до отриманої<br>спеціальності та кваліфікації з високим рівнем доходів та<br>кар’єрними досягненнями</div>

  </div></div>

  <!-- notes pane -->
  <div class="abs" style="left:357px;top:809px;width:1091px;height:1px;background:#cfcfcf"></div>
  <div class="abs" style="left:364px;top:815px;font-size:9.200px;line-height:12px;color:#555;white-space:nowrap">Нотатки до слайда</div>
  <!-- main scrollbar -->
  <div class="abs" style="left:1437.500px;top:257px;width:10.500px;height:516px;background:#dedcde"></div>
  <div class="abs" style="left:1437.500px;top:258px;width:10px;height:10px;background:#fff;border:1px solid #cfcfcf"></div><svg class="abs" style="left:1440px;top:261px" width="5" height="4" viewBox="0 0 5 4"><path d="M0 3.500h5L2.500 0.500z" fill="#666"/></svg>
  <div class="abs" style="left:1437.500px;top:417px;width:10px;height:23.500px;background:#fff;border:1px solid #d0d0d0"></div>
  <div class="abs" style="left:1437.500px;top:762px;width:10px;height:9.500px;background:#fff;border:1px solid #cfcfcf"></div><svg class="abs" style="left:1440px;top:765px" width="5" height="4" viewBox="0 0 5 4"><path d="M0 0.500h5L2.500 3.500z" fill="#666"/></svg>
  <svg class="abs" style="left:1439.500px;top:775px" width="6" height="7" viewBox="0 0 6 7"><path d="M0 3.200h6L3 0.200zM0 6.600h6L3 3.600z" fill="#777"/></svg>

  <div id="status"></div>

  <div class="abs" style="left:157px;top:843.500px;font-size:7.700px;line-height:13px;color:#3c3c3c;white-space:nowrap;letter-spacing:-0.280px">Слайд 6 з 19</div>
  <svg class="abs" style="left:212px;top:845px" width="11" height="10" viewBox="0 0 11 10"><path d="M0.500 0.700c1.600-0.500 3-0.300 4 0.700v7.600c-1-1-2.400-1.200-4-0.700zM4.500 1.400c1-1 2.400-1.200 4-0.700v2.500" fill="none" stroke="#666" stroke-width="0.800"/><path d="M6.200 5l3.600 4M9.800 5L6.200 9" stroke="#666" stroke-width="0.900"/></svg>
  <div class="abs" style="left:233.500px;top:843.500px;font-size:7.700px;line-height:13px;color:#3c3c3c;white-space:nowrap">українська</div>
  <svg class="abs" style="left:1096px;top:846px" width="8" height="8" viewBox="0 0 8 8"><path d="M0.500 4.500h7M0.500 6.800h7" stroke="#666" stroke-width="1"/><path d="M2 3h4L4 0.500z" fill="#666"/></svg>
  <div class="abs" style="left:1106.500px;top:843.500px;font-size:7.700px;line-height:13px;color:#3c3c3c;white-space:nowrap">Нотатки</div>
  <svg class="abs" style="left:1150px;top:846px" width="8" height="8" viewBox="0 0 8 8"><path d="M0.300 0.500h7.400v5H4l-2 2v-2H0.300z" fill="#666"/></svg>
  <div class="abs" style="left:1161px;top:843.500px;font-size:7.700px;line-height:13px;color:#3c3c3c;white-space:nowrap">Примітки</div>
  <div class="abs" style="left:1209px;top:843px;width:25px;height:14px;background:#c9c9c9"></div>
  <svg class="abs" style="left:1216px;top:845px" width="11" height="10" viewBox="0 0 11 10"><rect x="0.500" y="0.500" width="10" height="9" fill="none" stroke="#666" stroke-width="0.900"/><rect x="3.500" y="2.500" width="5" height="3.500" fill="none" stroke="#666" stroke-width="0.800"/><path d="M2.500 7.800h6" stroke="#666" stroke-width="0.800"/></svg>
  <svg class="abs" style="left:1241.500px;top:845.500px" width="11" height="9" viewBox="0 0 11 9"><g fill="none" stroke="#777" stroke-width="0.800"><rect x="0.500" y="0.500" width="4" height="3"/><rect x="6.500" y="0.500" width="4" height="3"/><rect x="0.500" y="5.500" width="4" height="3"/><rect x="6.500" y="5.500" width="4" height="3"/></g></svg>
  <svg class="abs" style="left:1267px;top:845.500px" width="10" height="9" viewBox="0 0 10 9"><path d="M0.500 1h4M0.500 3h4M0.500 5h4M0.500 7h4M5.500 1h4M5.500 3h4M5.500 5h4M5.500 7h4" stroke="#666" stroke-width="1"/><path d="M5 0v9" stroke="#888" stroke-width="0.600"/></svg>
  <svg class="abs" style="left:1292.500px;top:845px" width="10" height="10" viewBox="0 0 10 10"><path d="M0.300 0.800h9.400M1.500 1v4.800h7V1M5 6v2.500M2.800 9h4.400" fill="none" stroke="#666" stroke-width="0.900"/></svg>
  <div class="abs" style="left:1314.500px;top:849.500px;width:4px;height:1.200px;background:#555"></div>
  <div class="abs" style="left:1321.500px;top:849.700px;width:67px;height:0.800px;background:#8a8a8a"></div>
  <div class="abs" style="left:1355px;top:845.500px;width:2px;height:9px;background:#555"></div>
  <div class="abs" style="left:1391.500px;top:849.500px;width:5px;height:1.200px;background:#555"></div>
  <div class="abs" style="left:1393.400px;top:847.500px;width:1.200px;height:5px;background:#555"></div>

</div></div>

<svg class="abs" style="left:431.500px;top:570.500px" width="9" height="13.500" viewBox="0 0 10 15"><path d="M0.800 0.800v11.300l2.700-2.500 1.800 4.300 1.700-0.700-1.800-4.200h3.700z" fill="#fff" stroke="#5a5a5a" stroke-width="1.100"/></svg>
<!-- TASKBAR -->
<div id="task">
<div style="position:absolute;left:0;top:-857px;width:1600px;height:900px"><div class="abs" style="left:310px;top:858.500px;width:51px;height:39.500px;background:#f5b27c;border-radius:4px;box-shadow:inset 0 0 0 1px #f0a86e"></div>
<div class="abs" style="left:362px;top:858.500px;width:49px;height:39.500px;background:#eef1f8;border-radius:4px"></div>
<svg class="abs" style="left:13px;top:867.500px" width="23" height="23" viewBox="0 0 23 23"><defs><linearGradient id="wl" x1="0" y1="0" x2="1" y2="1"><stop offset="0" stop-color="#6cc4f5"/><stop offset="1" stop-color="#1f86d8"/></linearGradient></defs><rect x="0" y="0" width="10.800" height="10.800" rx="1" fill="url(#wl)"/><rect x="12.200" y="0" width="10.800" height="10.800" rx="1" fill="url(#wl)"/><rect x="0" y="12.200" width="10.800" height="10.800" rx="1" fill="url(#wl)"/><rect x="12.200" y="12.200" width="10.800" height="10.800" rx="1" fill="url(#wl)"/></svg>
<svg class="abs" style="left:62px;top:867px" width="26" height="24" viewBox="0 0 26 24"><rect x="6.500" y="0.500" width="19" height="17" rx="2" fill="#f2f3f6" stroke="#e2e4ea" stroke-width="0.600"/><rect x="9" y="4" width="11" height="10" fill="#c9c9c9"/><rect x="0.500" y="6.500" width="19" height="17" rx="2" fill="#2b2b2b"/><rect x="6.500" y="6.500" width="13" height="11" fill="#bdbdbd"/></svg>
<svg class="abs" style="left:115.80000000000001px;top:866.2px" width="25.0" height="25.0" viewBox="-50 -50 100 100"><circle r="50" fill="#fff"/><path d="M0 0L-43.300 -25A50 50 0 0 1 43.300 -25z" fill="#ea4335"/><path d="M0 0L43.300 -25A50 50 0 0 1 0 50z" fill="#fbbc04"/><path d="M0 0L0 50A50 50 0 0 1 -43.300 -25z" fill="#34a853"/><path d="M0 -25H43.300A50 50 0 0 0 -43.300 -25z" fill="#ea4335"/><path d="M21.650 12.500L0 50A50 50 0 0 0 43.300 -25H0z" fill="#fbbc04"/><path d="M-21.650 12.500L-43.300 -25A50 50 0 0 0 0 50L21.650 12.500z" fill="#34a853"/><circle r="23" fill="#fff"/><circle r="18.500" fill="#4285f4"/></svg>
<svg class="abs" style="left:168px;top:866.500px" width="25" height="25" viewBox="0 0 25 25"><circle cx="12.500" cy="12.500" r="12.300" fill="#e8142c"/><ellipse cx="12.500" cy="12.500" rx="5.600" ry="9.300" fill="#e9edf4"/><path d="M12.500 0.200a12.300 12.300 0 0 1 0 24.600c4.500-1 7.500-6 7.500-12.300S17 1.200 12.500 0.200z" fill="#b80d22"/></svg>
<svg class="abs" style="left:218.500px;top:867px" width="26" height="24" viewBox="0 0 26 24"><path d="M1 2.500a1.500 1.500 0 0 1 1.500-1.500h7l2.500 3h12.500a1.500 1.500 0 0 1 1.500 1.500V8H1z" fill="#e2a820"/><rect x="1" y="6" width="25" height="17" rx="1.500" fill="#fbd04e"/><rect x="1" y="12" width="25" height="11" rx="1.500" fill="#f5c13a"/><path d="M6.500 23v-5.500a1.500 1.500 0 0 1 1.500-1.500h10.500a1.500 1.500 0 0 1 1.500 1.500V23z" fill="#1d7fd6"/><rect x="9" y="18.200" width="8.500" height="2" rx="1" fill="#0f5ea8"/></svg>
<svg class="abs" style="left:271px;top:866.500px" width="25" height="25" viewBox="0 0 25 25"><defs><linearGradient id="wx" x1="0" y1="0" x2="1" y2="1"><stop offset="0" stop-color="#19b8e6"/><stop offset="1" stop-color="#2f5de0"/></linearGradient><linearGradient id="wy" x1="0" y1="1" x2="1" y2="0"><stop offset="0" stop-color="#2a63dd"/><stop offset="1" stop-color="#3cd45a"/></linearGradient></defs><rect width="25" height="25" rx="5.500" fill="#121418"/><ellipse cx="8.300" cy="12.800" rx="3.900" ry="6.600" transform="rotate(-14 8.300 12.800)" fill="none" stroke="url(#wx)" stroke-width="3.400"/><path d="M20.800 8.300a4.600 6.600 0 1 0 0.300 8.200" transform="rotate(-14 17 12.500)" fill="none" stroke="url(#wy)" stroke-width="3.400" stroke-linecap="round"/></svg>
<svg class="abs" style="left:322.500px;top:866px" width="28" height="28" viewBox="0 0 28 28"><circle cx="12.500" cy="12.500" r="11.800" fill="#2ea1d9"/><path d="M5.500 12.300l13.500-5.300c0.700-0.200 1.200 0.200 1 1l-2.300 10.800c-0.200 0.800-0.700 1-1.300 0.600l-3.500-2.600-1.700 1.700c-0.200 0.200-0.400 0.300-0.700 0.300l0.300-3.600 6.400-5.800c0.300-0.300-0.100-0.400-0.400-0.200l-7.900 5-3.400-1.100c-0.700-0.200-0.700-0.700 0-0.800z" fill="#fff"/><rect x="11" y="16.500" width="16" height="9.500" rx="3" fill="#e8453c"/></svg>
<div class="abs" style="left:333.500px;top:882.500px;width:16px;text-align:center;font-size:8px;line-height:9.500px;color:#fff;font-weight:bold;letter-spacing:-0.300px">141</div>
<svg class="abs" style="left:374px;top:866px" width="25.500" height="25.500" viewBox="0 0 26 26"><defs><linearGradient id="zg" x1="0" y1="0" x2="0" y2="1"><stop offset="0" stop-color="#2f7df6"/><stop offset="1" stop-color="#0b4fd3"/></linearGradient></defs><circle cx="13" cy="13" r="12.800" fill="url(#zg)"/></svg>
<div class="abs" style="left:374px;top:871.500px;width:25.500px;text-align:center;font-size:10.500px;line-height:12px;color:#fff;font-weight:bold;letter-spacing:-0.200px">zm</div>
<svg class="abs" style="left:426.500px;top:866px" width="25" height="27" viewBox="0 0 25 27"><path d="M12.500 1c6.500 0 11 3.500 11 10.500s-4.500 10.500-11 10.500c-1 0-2-0.100-2.900-0.300L6.200 25.500c-0.500 0.500-1 0.300-1-0.400v-4.600C2.700 18.600 1.500 15.500 1.500 11.500 1.500 4.500 6 1 12.500 1z" fill="#7b5be8" stroke="#f3f1fb" stroke-width="1.200"/><path d="M8.300 6.600c0.500-0.400 1.200-0.300 1.600 0.300l1 1.600c0.300 0.500 0.200 1.100-0.200 1.500l-0.600 0.600c0.700 1.700 2 3 3.700 3.700l0.600-0.600c0.400-0.400 1-0.500 1.500-0.200l1.600 1c0.600 0.400 0.700 1.100 0.300 1.600-0.800 1-1.800 1.500-3 1.100-4-1.300-7.100-4.400-8.400-8.400-0.300-0.800 0.700-1.500 1.900-2.200z" fill="#fff"/><path d="M13 5.500c2.800 0.200 5 2.400 5.200 5.200M13.200 7.700c1.600 0.200 2.800 1.400 3 3" fill="none" stroke="#fff" stroke-width="0.900" stroke-linecap="round"/></svg>
<svg class="abs" style="left:477.500px;top:866px" width="25" height="26" viewBox="0 0 25 26"><path d="M0.500 1.500a1 1 0 0 1 1-1H18l6.500 6.500V24.500a1 1 0 0 1-1 1h-22a1 1 0 0 1-1-1z" fill="#f58a1f"/><path d="M18 0.500V6a1 1 0 0 0 1 1h5.500z" fill="#fbd0a0"/><path d="M16.500 8.500c-5-3-11 0.500-9.500 5.500 1.200 3.600 6.500 3.800 8 1l-3.500-1 0.500-2.500 5.500 1c0.500 5-3.500 7-7 6.500-5-0.800-7.500-6-5-10.500 2.500-4 8-4.500 11-0z" fill="#fff"/><text x="12.500" y="23.500" font-family="Liberation Sans,sans-serif" font-size="6.200" font-weight="bold" fill="#fff" text-anchor="middle">PDF</text></svg>
<svg class="abs" style="left:529px;top:866px" width="26" height="26" viewBox="0 0 26 26"><rect x="1" y="1.500" width="20" height="20" fill="#fdfdfe" stroke="#b8c4dc" stroke-width="0.800"/><path d="M3.500 18h15M3.500 20h15" stroke="#8aa0cc" stroke-width="0.800"/><text x="10.500" y="15.500" font-family="Liberation Sans,sans-serif" font-size="15.500" font-weight="bold" fill="#1d4fa3" text-anchor="middle" transform="scale(1.100 1)" style="letter-spacing:-0.500px">W</text><path d="M15.500 14.500l8-2.500 2 10-9 2.500z" fill="#f4f6fb" stroke="#9fb0d0" stroke-width="0.700"/><path d="M17.500 17l5-1.500M18 19l5-1.500" stroke="#9fb0d0" stroke-width="0.700"/></svg>
<svg class="abs" style="left:581.0px;top:866.2px" width="25.0" height="25.0" viewBox="-50 -50 100 100"><circle r="50" fill="#fff"/><path d="M0 0L-43.300 -25A50 50 0 0 1 43.300 -25z" fill="#ea4335"/><path d="M0 0L43.300 -25A50 50 0 0 1 0 50z" fill="#fbbc04"/><path d="M0 0L0 50A50 50 0 0 1 -43.300 -25z" fill="#34a853"/><path d="M0 -25H43.300A50 50 0 0 0 -43.300 -25z" fill="#ea4335"/><path d="M21.650 12.500L0 50A50 50 0 0 0 43.300 -25H0z" fill="#fbbc04"/><path d="M-21.650 12.500L-43.300 -25A50 50 0 0 0 0 50L21.650 12.500z" fill="#34a853"/><circle r="23" fill="#fff"/><circle r="18.500" fill="#4285f4"/></svg>
<div class="abs" style="left:164.5px;top:897.500px;width:32.5px;height:3px;background:#0c69c0"></div>
<div class="abs" style="left:216px;top:897.500px;width:32.5px;height:3px;background:#0c69c0"></div>
<div class="abs" style="left:312.5px;top:897.500px;width:45px;height:3px;background:#f0823a"></div>
<div class="abs" style="left:366.5px;top:897.500px;width:43.5px;height:3px;background:#0c69c0"></div>
<div class="abs" style="left:422.5px;top:897.500px;width:32.5px;height:3px;background:#0c69c0"></div>
<div class="abs" style="left:526px;top:897.500px;width:33px;height:3px;background:#0c69c0"></div>
<div class="abs" style="left:577px;top:897.500px;width:33px;height:3px;background:#0c69c0"></div>
<svg class="abs" style="left:1215px;top:870px" width="18" height="18" viewBox="0 0 18 18"><rect x="1" y="2.500" width="12.500" height="14" rx="1" fill="#e8c24a" stroke="#b99428" stroke-width="0.800"/><rect x="4" y="0.800" width="6.500" height="3.500" rx="0.800" fill="#d9d2b8" stroke="#8c8468" stroke-width="0.700"/><rect x="3" y="6.500" width="8.500" height="6" fill="#f3d978"/><path d="M11 9.500h2.500v6.500H11zM14.200 11.500h2.300v4.500h-2.300z" fill="#f08048"/><path d="M11.500 8.500l3 2.500" stroke="#f08048" stroke-width="1"/></svg>
<svg class="abs" style="left:1243px;top:868px" width="14" height="21" viewBox="0 0 14 21"><rect x="4" y="0.500" width="6" height="12" rx="3" fill="#2f8de4"/><path d="M1.500 9.500a5.500 5.500 0 0 0 11 0" fill="none" stroke="#2f8de4" stroke-width="1.500"/><path d="M7 15v4.500" stroke="#5a6670" stroke-width="1.600"/></svg>
<svg class="abs" style="left:1266.500px;top:870px" width="17.500" height="17.500" viewBox="0 0 18 18"><circle cx="9" cy="9" r="8.800" fill="#1f6ef0"/></svg><div class="abs" style="left:1266.500px;top:873px;width:17.500px;text-align:center;font-size:7.400px;line-height:9px;color:#fff;font-weight:bold">zm</div>
<svg class="abs" style="left:1291.500px;top:868.500px" width="18" height="20" viewBox="0 0 18 20"><path d="M8.500 3c4.500 0 7.500 2.400 7.500 7s-3 7-7.500 7c-0.700 0-1.300 0-1.900-0.200L4.400 19c-0.400 0.400-0.800 0.200-0.800-0.300v-3C1.900 14.500 1 12.500 1 10c0-4.600 3-7 7.500-7z" fill="#8460e6"/><path d="M5.800 7c0.400-0.300 0.800-0.200 1.100 0.200l0.700 1.100c0.200 0.300 0.100 0.700-0.100 1l-0.400 0.400c0.500 1.100 1.300 2 2.500 2.500l0.400-0.400c0.300-0.300 0.700-0.300 1-0.100l1.100 0.700c0.400 0.300 0.500 0.700 0.200 1.100-0.600 0.700-1.200 1-2 0.700-2.700-0.900-4.800-3-5.700-5.700C4.400 8 5 7.500 5.800 7z" fill="#fff"/><circle cx="14.500" cy="3.500" r="2.600" fill="#e8192c"/></svg>
<svg class="abs" style="left:1316px;top:870px" width="19" height="18" viewBox="0 0 19 18"><path d="M1 9.500L17.500 1.500 14 15.500 9 12l-2 3.500-0.500-5z" fill="#1c1c1c"/><path d="M6.500 10.500L17.500 1.500 9 12z" fill="#4a4a4a"/><circle cx="3.500" cy="14.500" r="2.300" fill="#e8192c"/></svg>
<svg class="abs" style="left:1341.500px;top:870px" width="17" height="17" viewBox="0 0 17 17"><rect x="0.500" y="0.500" width="16" height="16" fill="#2f78b4"/><rect x="2" y="2" width="13" height="12" fill="#6fb1dc"/><path d="M2 14l13-12v12z" fill="#4f97cc"/></svg>
<svg class="abs" style="left:1366.500px;top:869px" width="17" height="19" viewBox="0 0 17 19"><path d="M8.500 0.500l8 2.500c0 8-3 13-8 15.500-5-2.500-8-7.500-8-15.500z" fill="#fff" stroke="#c9ced6" stroke-width="0.600"/><path d="M8.500 0.500l-8 2.500c0 2.500 0.300 4.700 0.900 6.500H8.500z" fill="#de2b20"/><path d="M8.500 9.500h7.100c-1.200 4.200-3.600 7.200-7.100 9z" fill="#de2b20"/></svg>
<svg class="abs" style="left:1391px;top:870px" width="19" height="17" viewBox="0 0 19 17"><path d="M1 5.800h3l4.200-3.800v13L4 11.200H1z" fill="none" stroke="#1a1a1a" stroke-width="1.200" stroke-linejoin="round"/><path d="M10.800 5.500a4.200 4.200 0 0 1 0 6M13 3.300a7.300 7.300 0 0 1 0 10.400M15.300 1.300a10.300 10.300 0 0 1 0 14.400" fill="none" stroke="#1a1a1a" stroke-width="1.200" stroke-linecap="round"/></svg>
<svg class="abs" style="left:1415px;top:869px" width="20" height="18" viewBox="0 0 20 18"><rect x="2" y="6.500" width="14.500" height="9.500" rx="2" fill="none" stroke="#1a1a1a" stroke-width="1.300"/><path d="M17.500 9.500h1.200v3.500h-1.200z" fill="#1a1a1a"/><rect x="4" y="8.500" width="5" height="5.500" fill="#1a1a1a"/><path d="M5 0.500l-3.500 6h3l-1 5 4.500-7H5z" fill="#1a1a1a" stroke="#e6eaf2" stroke-width="0.800"/></svg>
<svg class="abs" style="left:1441.500px;top:872px" width="17" height="13" viewBox="0 0 17 13"><path d="M1 4.500a10.600 10.600 0 0 1 15 0" fill="none" stroke="#b0b6c0" stroke-width="1.300" stroke-linecap="round"/><path d="M3.300 7a7.400 7.400 0 0 1 10.400 0M5.600 9.400a4.100 4.100 0 0 1 5.800 0" fill="none" stroke="#1a1a1a" stroke-width="1.300" stroke-linecap="round"/><circle cx="8.500" cy="11.500" r="1.200" fill="#1a1a1a"/></svg>
<div class="abs" style="left:1469px;top:872px;font-size:11.200px;line-height:14px;color:#1a1a1a;white-space:nowrap">УКР</div>
<div class="abs" style="left:1495px;top:862.500px;width:75px;text-align:center;font-size:11.600px;line-height:14px;color:#1a1a1a;white-space:nowrap">13:13</div>
<div class="abs" style="left:1495px;top:882.500px;width:75px;text-align:center;font-size:11.600px;line-height:14px;color:#1a1a1a;white-space:nowrap">03.03.2026</div>
<svg class="abs" style="left:1569px;top:870.500px" width="15" height="17" viewBox="0 0 15 17"><path d="M7.500 0.800c3 0 5 2.300 5 5.200v3.500l1.800 2.800v0.900H0.700v-0.900l1.800-2.800V6c0-2.900 2-5.200 5-5.200z" fill="#111"/><path d="M5.300 14.300h4.400a2.200 2.200 0 0 1-4.400 0z" fill="#111"/></svg></div>
</div>

<div class="abs" style="left:1286px;top:856.500px;width:162px;height:1.500px;background:#5d6068"></div>
<!-- TOOLTIP -->
<div id="tip">
<svg class="abs" style="left:2.500px;top:2px" width="13" height="13" viewBox="0 0 18 18"><rect x="1" y="2.500" width="12.500" height="14" rx="1" fill="#e8c24a" stroke="#b99428" stroke-width="0.800"/><rect x="4" y="0.800" width="6.500" height="3.500" rx="0.800" fill="#d9d2b8" stroke="#8c8468" stroke-width="0.700"/><rect x="3" y="6.500" width="8.500" height="6" fill="#f3d978"/><path d="M11 9.500h2.500v6.500H11zM14.200 11.500h2.300v4.500h-2.300z" fill="#f08048"/></svg>
<div class="abs" style="left:19px;top:3px;font-weight:bold;font-size:11.800px;white-space:nowrap;letter-spacing:-0.150px">Буфер обмена (24 из 24)</div>
<div class="abs" style="left:2px;top:19.500px;white-space:nowrap;color:#262626">Объект не добавлен в буфер:<br>его формат не поддерживается<br>буфером обмена Office</div>
</div>

</div>
</body>
</html>
